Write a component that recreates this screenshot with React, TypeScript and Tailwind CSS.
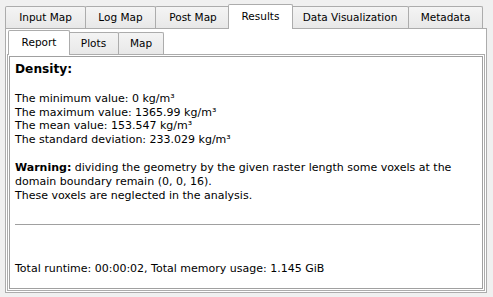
import React from "react";

const FONT = { fontFamily: '"DejaVu Sans", sans-serif' };

interface TabProps {
  label: string;
  width: string;
  selected?: boolean;
}

const Tab: React.FC<TabProps> = ({ label, width, selected }) =>
  selected ? (
    <div
      className={`${width} relative z-10 -mx-[2px] -mb-px flex h-[25px] items-center justify-center rounded-t-[2px] border border-b-0 border-[#acacac] bg-white pb-[1px] text-[10.5px] text-black`}
    >
      {label}
    </div>
  ) : (
    <div
      className={`${width} -mr-px flex h-[22px] items-center justify-center rounded-t-[2px] border border-b-0 border-[#acacac] bg-gradient-to-b from-[#f4f4f4] to-[#e8e8e8] text-[10.5px] text-black`}
    >
      {label}
    </div>
  );

export default function App() {
  return (
    <div className="flex h-[297px] w-[493px] flex-col bg-[#f0f0f0] text-black" style={FONT}>
      {/* outer tabs */}
      <div className="flex items-end pl-[5px] pt-[4px]">
        <Tab label="Input Map" width="w-[81px]" />
        <Tab label="Log Map" width="w-[71px]" />
        <Tab label="Post Map" width="w-[76px]" />
        <Tab label="Results" width="w-[65px]" selected />
        <Tab label="Data Visualization" width="w-[118px]" />
        <Tab label="Metadata" width="w-[75px]" />
      </div>

      {/* outer pane */}
      <div className="ml-[5px] flex h-[265px] w-[482px] flex-col border border-[#acacac] bg-white p-px">
        {/* inner tabs */}
        <div className="flex items-end pl-[3px]">
          <Tab label="Report" width="w-[62px]" selected />
          <Tab label="Plots" width="w-[51px]" />
          <Tab label="Map" width="w-[46px]" />
        </div>

        {/* inner pane */}
        <div className="flex flex-1 flex-col border border-[#acacac] bg-white p-px">
          <div className="flex flex-1 flex-col border border-[#a0a0a0] bg-white pl-[5px] pr-[2px] pt-[4px] text-[11px] leading-[13.6px]">
            <div className="text-[12.2px] font-bold leading-[17px]">Density:</div>
            <div className="mt-[14px]">
              <div>The minimum value: 0 kg/m³</div>
              <div>The maximum value: 1365.99 kg/m³</div>
              <div>The mean value: 153.547 kg/m³</div>
              <div>The standard deviation: 233.029 kg/m³</div>
            </div>
            <div className="mt-[15px]">
              <div>
                <span className="font-bold">Warning:</span> dividing the geometry by the given raster length some voxels at the
              </div>
              <div>domain boundary remain (0, 0, 16).</div>
              <div>These voxels are neglected in the analysis.</div>
            </div>
            <div className="mt-[22px] h-px bg-[#a0a0a0]" />
            <div className="mt-[37px]">Total runtime: 00:00:02, Total memory usage: 1.145 GiB</div>
          </div>
        </div>
      </div>
    </div>
  );
}
